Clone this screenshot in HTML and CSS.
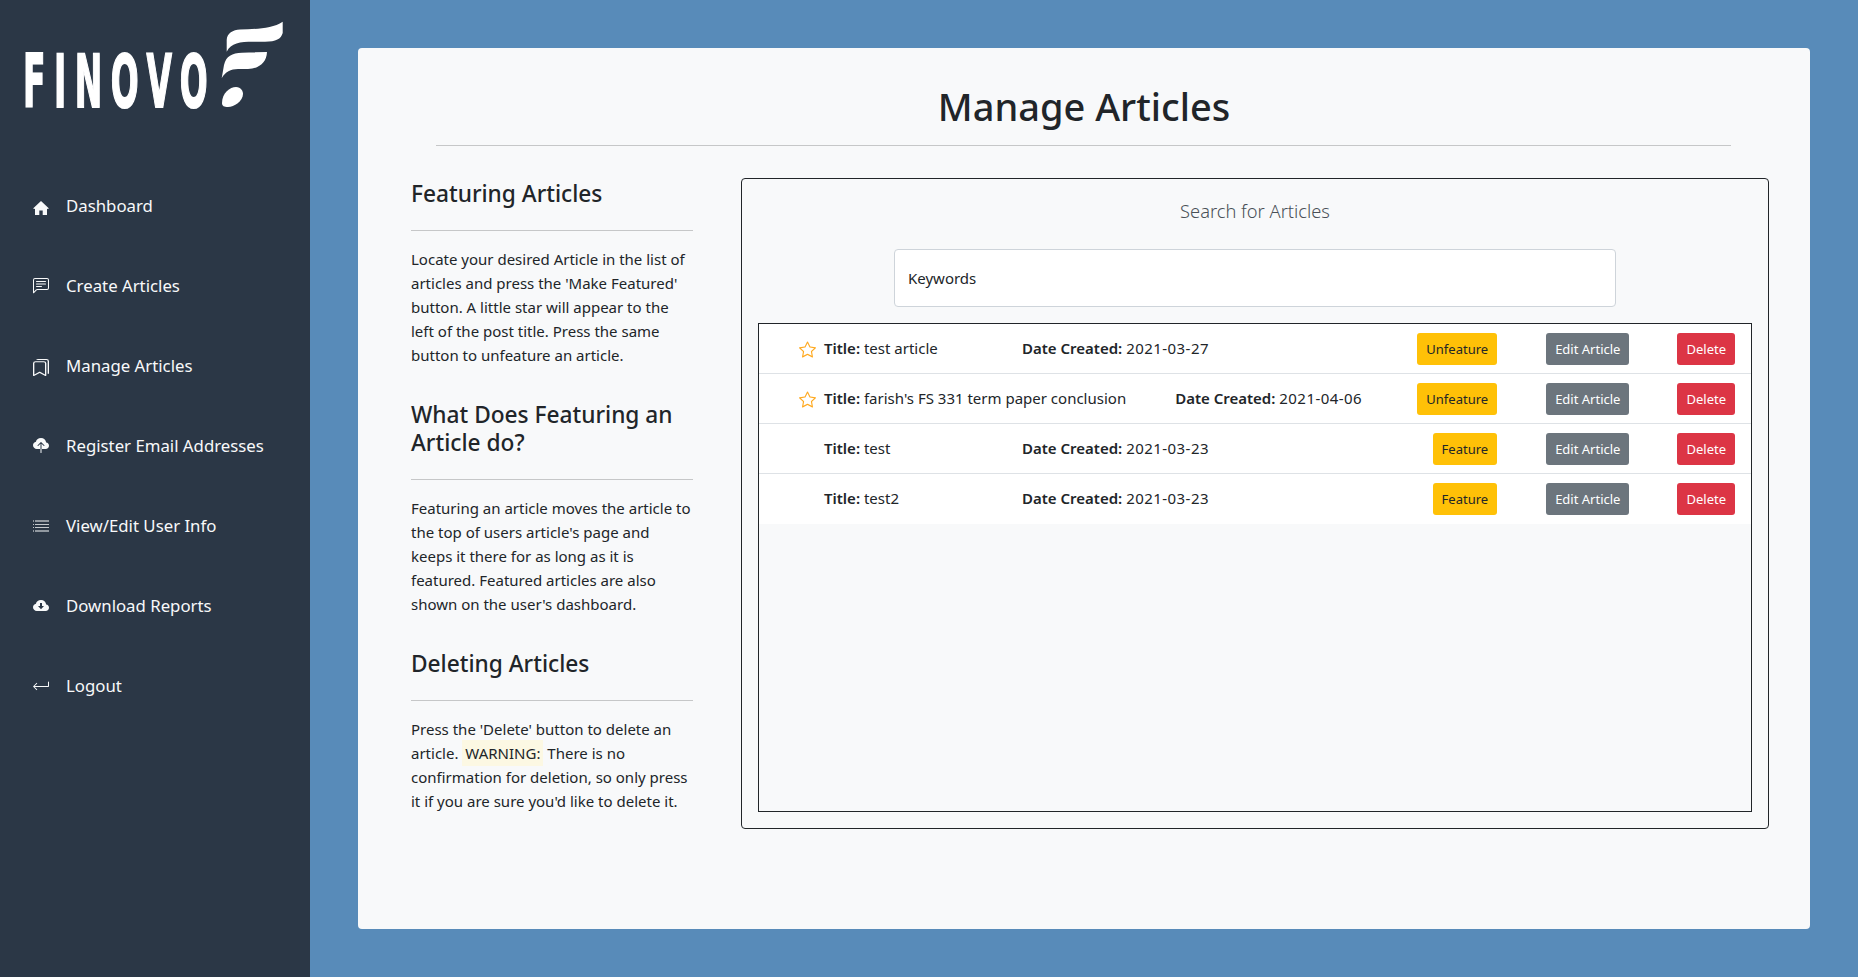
FILE: index.html
```html
<!DOCTYPE html>
<html lang="en">
<head>
  <meta charset="UTF-8">
  <title>Manage Articles</title>
  <link rel="stylesheet" href="styles.css">
</head>
<body>

  <nav class="sidebar">
    <div class="logo">
      <span class="logo-text">FINOVO</span>
      <svg class="logo-mark" viewBox="220 20 65 90" fill="#fff">
        <path d="M226.7 51.7 V40 C227 33 233 30 240 29.5 C255 29 272 29 282.7 21.7 V33 C281 39 276 41.7 265 41.7 H253 C240 41.7 231 43 226.7 51.7 Z"/>
        <path d="M221.7 78.3 L224 65 C226 56 232 53 242 52.7 L267 52 C266.5 62 260 68.5 248 69 H238 C231 69 225 72 221.7 78.3 Z"/>
        <path d="M222 103 C222 93 230 87 236 87 C241 87 243 91 243 94 C243 101 234 107 228 107 C224 107 222 106 222 103 Z"/>
      </svg>
    </div>
    <ul class="nav-list">
      <li>
        <svg class="nav-icon icon-home" viewBox="0 0 16 16" fill="currentColor"><path d="M8 1 16 8.5 14 9V15H9.7V10.5H6.3V15H2V9L0 8.5Z"/></svg>
        <a href="#">Dashboard</a>
      </li>
      <li>
        <svg class="nav-icon" viewBox="0 0 16 16" fill="currentColor"><path d="M14 1a1 1 0 0 1 1 1v8a1 1 0 0 1-1 1H4.414A2 2 0 0 0 3 11.586l-2 2V2a1 1 0 0 1 1-1h12zM2 0a2 2 0 0 0-2 2v12.793a.5.5 0 0 0 .854.353l2.853-2.853A1 1 0 0 1 4.414 12H14a2 2 0 0 0 2-2V2a2 2 0 0 0-2-2H2z"/><path d="M3 3.5a.5.5 0 0 1 .5-.5h9a.5.5 0 0 1 0 1h-9a.5.5 0 0 1-.5-.5zM3 6a.5.5 0 0 1 .5-.5h9a.5.5 0 0 1 0 1h-9A.5.5 0 0 1 3 6zm0 2.5a.5.5 0 0 1 .5-.5h5a.5.5 0 0 1 0 1h-5a.5.5 0 0 1-.5-.5z"/></svg>
        <a href="#">Create Articles</a>
      </li>
      <li>
        <svg class="nav-icon icon-marks" viewBox="2 0 12 16" preserveAspectRatio="none" fill="currentColor"><path d="M2 4a2 2 0 0 1 2-2h6a2 2 0 0 1 2 2v11.5a.5.5 0 0 1-.777.416L7 13.101l-4.223 2.815A.5.5 0 0 1 2 15.5V4zm2-1a1 1 0 0 0-1 1v10.566l3.723-2.482a.5.5 0 0 1 .554 0L11 14.566V4a1 1 0 0 0-1-1H4z"/><path d="M4.268 1H12a1 1 0 0 1 1 1v11.768l.223.148A.5.5 0 0 0 14 13.5V2a2 2 0 0 0-2-2H6a2 2 0 0 0-1.732 1z"/></svg>
        <a href="#">Manage Articles</a>
      </li>
      <li>
        <svg class="nav-icon" viewBox="0 0 16 16" fill="currentColor"><path d="M8 0a5.53 5.53 0 0 0-3.594 1.342c-.766.66-1.321 1.52-1.464 2.383C1.266 4.095 0 5.555 0 7.318 0 9.366 1.708 11 3.781 11H7.5V5.707L5.354 7.854a.5.5 0 1 1-.708-.708l3-3a.5.5 0 0 1 .708 0l3 3a.5.5 0 0 1-.708.708L8.5 5.707V11h4.188C14.502 11 16 9.57 16 7.773c0-1.636-1.242-2.969-2.834-3.194C12.923 1.999 10.69 0 8 0zm-.5 14.5V11h1v3.5a.5.5 0 0 1-1 0z"/></svg>
        <a href="#">Register Email Addresses</a>
      </li>
      <li>
        <svg class="nav-icon" viewBox="0 0 16 16" fill="currentColor"><path d="M0 2.6h1v.9H0zM2 2.6h14v.9H2zM0 5.9h1v.9H0zM2 5.9h14v.9H2zM0 9.2h1v.9H0zM2 9.2h14v.9H2zM0 12.5h1v.9H0zM2 12.5h14v.9H2z"/></svg>
        <a href="#">View/Edit User Info</a>
      </li>
      <li>
        <svg class="nav-icon" viewBox="0 0 16 16" fill="currentColor"><path fill-rule="evenodd" d="M8 2a5.53 5.53 0 0 0-3.594 1.342c-.766.66-1.321 1.52-1.464 2.383C1.266 6.095 0 7.555 0 9.318 0 11.366 1.708 13 3.781 13h8.906C14.502 13 16 11.57 16 9.773c0-1.636-1.242-2.969-2.834-3.194C12.923 3.999 10.69 2 8 2zM7 5h2v3h2l-3 3.2L5 8h2z"/></svg>
        <a href="#">Download Reports</a>
      </li>
      <li>
        <svg class="nav-icon" viewBox="0 0 16 16" fill="currentColor"><path d="M15.5 3.5a.5.5 0 0 1 .5.5v4.2a.8.8 0 0 1-.8.8H1.7l2.6 2.6-.6.6L0 8.5l3.7-3.7.6.6L1.7 8h13.3V4a.5.5 0 0 1 .5-.5z"/></svg>
        <a href="#">Logout</a>
      </li>
    </ul>
  </nav>

  <main class="content">
    <div class="card">
      <h1 class="page-title">Manage Articles</h1>
      <hr class="title-rule">

      <div class="columns">
        <section class="help">
          <h2>Featuring Articles</h2>
          <hr>
          <p>Locate your desired Article in the list of articles and press the 'Make Featured' button. A little star will appear to the left of the post title. Press the same button to unfeature an article.</p>

          <h2>What Does Featuring an Article do?</h2>
          <hr>
          <p>Featuring an article moves the article to the top of users article's page and keeps it there for as long as it is featured. Featured articles are also shown on the user's dashboard.</p>

          <h2>Deleting Articles</h2>
          <hr>
          <p>Press the 'Delete' button to delete an article. <mark>WARNING:</mark> There is no confirmation for deletion, so only press it if you are sure you'd like to delete it.</p>
        </section>

        <section class="search-box">
          <div class="search-label">Search for Articles</div>
          <input class="search-input" type="text" placeholder="Keywords">

          <ul class="article-list">
            <li class="article">
              <svg class="star" viewBox="0 0 16 16" fill="#ffa91f"><path d="M2.866 14.85c-.078.444.36.791.746.593l4.39-2.256 4.389 2.256c.386.198.824-.149.746-.592l-.83-4.73 3.522-3.356c.33-.314.16-.888-.282-.95l-4.898-.696L8.465.792a.513.513 0 0 0-.927 0L5.354 5.12l-4.898.696c-.441.062-.612.636-.283.95l3.523 3.356-.83 4.73zm4.905-2.767-3.686 1.894.694-3.957a.565.565 0 0 0-.163-.505L1.71 6.745l4.052-.576a.525.525 0 0 0 .393-.288L8 2.223l1.847 3.658a.525.525 0 0 0 .393.288l4.052.575-2.906 2.77a.565.565 0 0 0-.163.506l.694 3.957-3.686-1.894a.503.503 0 0 0-.461 0z"/></svg>
              <span class="article-title"><b>Title:</b> test article</span>
              <span class="article-date"><b>Date Created:</b> <span class="date-value">2021-03-27</span></span>
              <span class="article-actions">
                <a class="btn btn-warning" href="#">Unfeature</a>
                <a class="btn btn-secondary" href="#">Edit Article</a>
                <a class="btn btn-danger" href="#">Delete</a>
              </span>
            </li>
            <li class="article">
              <svg class="star" viewBox="0 0 16 16" fill="#ffa91f"><path d="M2.866 14.85c-.078.444.36.791.746.593l4.39-2.256 4.389 2.256c.386.198.824-.149.746-.592l-.83-4.73 3.522-3.356c.33-.314.16-.888-.282-.95l-4.898-.696L8.465.792a.513.513 0 0 0-.927 0L5.354 5.12l-4.898.696c-.441.062-.612.636-.283.95l3.523 3.356-.83 4.73zm4.905-2.767-3.686 1.894.694-3.957a.565.565 0 0 0-.163-.505L1.71 6.745l4.052-.576a.525.525 0 0 0 .393-.288L8 2.223l1.847 3.658a.525.525 0 0 0 .393.288l4.052.575-2.906 2.77a.565.565 0 0 0-.163.506l.694 3.957-3.686-1.894a.503.503 0 0 0-.461 0z"/></svg>
              <span class="article-title"><b>Title:</b> farish's FS 331 term paper conclusion</span>
              <span class="article-date"><b>Date Created:</b> <span class="date-value">2021-04-06</span></span>
              <span class="article-actions">
                <a class="btn btn-warning" href="#">Unfeature</a>
                <a class="btn btn-secondary" href="#">Edit Article</a>
                <a class="btn btn-danger" href="#">Delete</a>
              </span>
            </li>
            <li class="article no-star">
              <span class="article-title"><b>Title:</b> test</span>
              <span class="article-date"><b>Date Created:</b> <span class="date-value">2021-03-23</span></span>
              <span class="article-actions">
                <a class="btn btn-warning" href="#">Feature</a>
                <a class="btn btn-secondary" href="#">Edit Article</a>
                <a class="btn btn-danger" href="#">Delete</a>
              </span>
            </li>
            <li class="article no-star">
              <span class="article-title"><b>Title:</b> test2</span>
              <span class="article-date"><b>Date Created:</b> <span class="date-value">2021-03-23</span></span>
              <span class="article-actions">
                <a class="btn btn-warning" href="#">Feature</a>
                <a class="btn btn-secondary" href="#">Edit Article</a>
                <a class="btn btn-danger" href="#">Delete</a>
              </span>
            </li>
          </ul>
        </section>
      </div>
    </div>
  </main>

</body>
</html>
```

FILE: styles.css
```css
* {
  box-sizing: border-box;
}
body {
  margin: 0;
  height: 977px;
  display: flex;
  background-color: #588bb9;
  font-family: "Noto Sans", "Open Sans", sans-serif;
  font-size: 15px;
  line-height: 24px;
  color: #212529;
  overflow: hidden;
}

/* sidebar */
.sidebar {
  width: 310px;
  flex-shrink: 0;
  background-color: #2b3746;
  color: #f8f9fa;
}
.logo {
  height: 166px;
  padding: 20px 0 0 23px;
  display: flex;
}
.logo-text {
  display: block;
  width: 197px;
  height: 90px;
  margin-top: 17px;
  font-family: "DejaVu Sans", sans-serif;
  font-weight: bold;
  font-size: 73px;
  line-height: 90px;
  letter-spacing: 19px;
  color: #fff;
  -webkit-text-stroke: 2px #fff;
  white-space: nowrap;
  transform: scaleX(0.45);
  transform-origin: left top;
}
.logo-mark {
  width: 65px;
  height: 90px;
}
.nav-list {
  list-style: none;
  margin: 0;
  padding: 0;
}
.nav-list li {
  height: 80px;
  padding-left: 33px;
  display: flex;
  align-items: center;
  gap: 17px;
}
.nav-list a {
  color: #f8f9fa;
  text-decoration: none;
  font-size: 16.8px;
}
.nav-icon {
  width: 16px;
  height: 16px;
  flex-shrink: 0;
}
.icon-home {
  margin-top: 3px;
}
.icon-marks {
  height: 17px;
  margin-top: 2px;
}

/* main card */
.content {
  flex: 1;
  padding: 48px 50px 48px 48px;
}
.card {
  height: 881px;
  background-color: #f8f9fa;
  border-radius: 4px;
  padding: 32px 41px 0 53px;
}
.page-title {
  margin: 0;
  text-align: center;
  font-size: 38px;
  font-weight: 500;
  line-height: 52px;
  padding-right: 12px;
}
.title-rule {
  margin: 13px 38px 0 25px;
}
hr {
  border: 0;
  border-top: 1px solid #c6c7c8;
  margin: 0;
}
.columns {
  display: flex;
  margin-top: 32px;
  gap: 48px;
}

/* help text on the left */
.help {
  width: 282px;
  flex-shrink: 0;
  padding-top: 1px;
}
.help h2 {
  margin: 0;
  padding-top: 1px;
  font-size: 22.7px;
  font-weight: 500;
  line-height: 28px;
}
.help hr {
  margin: 22px 0 16px;
}
.help p {
  margin: 0 0 33px;
}
mark {
  background-color: #fcf8e3;
  padding: 3px;
  color: inherit;
}

/* search box on the right */
.search-box {
  width: 1028px;
  height: 651px;
  border: 1px solid #212529;
  border-radius: 4px;
  padding: 16px 16px 16px;
}
.search-label {
  text-align: center;
  font-size: 18.3px;
  font-weight: 300;
  line-height: 32px;
  color: #495057;
}
.search-input {
  display: block;
  width: 722px;
  height: 58px;
  margin: 22px auto 16px;
  padding: 0 13px;
  border: 1px solid #ced4da;
  border-radius: 4px;
  background: #fff;
  font: inherit;
}
.search-input::placeholder {
  color: #212529;
  opacity: 1;
}
.article-list {
  list-style: none;
  margin: 0;
  padding: 0;
  height: 489px;
  border: 1px solid #212529;
}
.article {
  height: 50px;
  padding: 0 16px 0 40px;
  background-color: #fff;
  border-bottom: 1px solid #dee2e6;
  display: flex;
  align-items: center;
}
.article:last-child {
  border-bottom: 0;
}
.star {
  width: 17px;
  height: 17px;
  margin-right: 8px;
  margin-top: 2px;
}
.no-star {
  padding-left: 65px;
}
.article-title {
  min-width: 198px;
  padding-right: 49px;
  margin-bottom: 2px;
}
.article-date {
  margin-bottom: 2px;
}
.article-title b, .article-date b {
  font-weight: 600;
}
.date-value {
  letter-spacing: .45px;
}
.article-actions {
  margin-left: auto;
  display: flex;
  gap: 48px;
}
.btn {
  display: block;
  height: 32px;
  padding: 0 9px;
  border-radius: 3px;
  font-size: 13px;
  line-height: 32px;
  text-decoration: none;
}
.btn-warning {
  background-color: #ffc107;
  color: #212529;
  margin-right: 1px;
}
.btn-secondary {
  background-color: #6c757d;
  color: #fff;
}
.btn-danger {
  background-color: #dc3545;
  color: #fff;
}
```
